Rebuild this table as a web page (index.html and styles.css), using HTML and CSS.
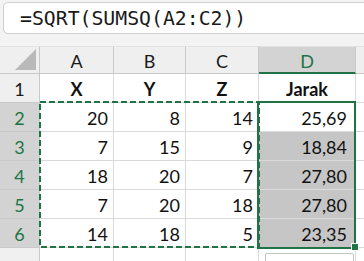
FILE: index.html
```html
<!DOCTYPE html>
<html>
<head>
<meta charset="utf-8">
<link rel="stylesheet" href="styles.css">
</head>
<body>
<div class="app">
  <div class="fbar-wrap">
    <div class="fbar">=SQRT(SUMSQ(A2:C2))</div>
  </div>
  <div class="sheet">
    <div class="h corner"><span class="tri"></span></div>
    <div class="h col">A</div>
    <div class="h col">B</div>
    <div class="h col">C</div>
    <div class="h col sel">D</div>
    <div class="h col rest"></div>

    <div class="h row">1</div>
    <div class="c b">X</div>
    <div class="c b">Y</div>
    <div class="c b">Z</div>
    <div class="c b">Jarak</div>
    <div class="c rest"></div>

    <div class="h row sel">2</div>
    <div class="c n">20</div>
    <div class="c n">8</div>
    <div class="c n">14</div>
    <div class="c n d">25,69</div>
    <div class="c rest"></div>

    <div class="h row sel">3</div>
    <div class="c n">7</div>
    <div class="c n">15</div>
    <div class="c n">9</div>
    <div class="c n d hl">18,84</div>
    <div class="c rest"></div>

    <div class="h row sel">4</div>
    <div class="c n">18</div>
    <div class="c n">20</div>
    <div class="c n">7</div>
    <div class="c n d hl">27,80</div>
    <div class="c rest"></div>

    <div class="h row sel">5</div>
    <div class="c n">7</div>
    <div class="c n">20</div>
    <div class="c n">18</div>
    <div class="c n d hl">27,80</div>
    <div class="c rest"></div>

    <div class="h row sel">6</div>
    <div class="c n">14</div>
    <div class="c n">18</div>
    <div class="c n">5</div>
    <div class="c n d hl">23,35</div>
    <div class="c rest"></div>

    <div class="h row empty"></div>
    <div class="c e"></div>
    <div class="c e"></div>
    <div class="c e"></div>
    <div class="c e"></div>
    <div class="c e rest"></div>

    <svg class="marquee" width="222" height="148" viewBox="0 0 222 148">
      <rect x="1" y="1" width="219" height="145" fill="none" stroke="#217346" stroke-width="2" stroke-dasharray="6 3"/>
    </svg>
    <div class="selbox"></div>
    <div class="handle"></div>
    <div class="qa"></div>
  </div>
</div>
</body>
</html>
```
FILE: styles.css
```css
* { box-sizing: border-box; }
html, body { margin: 0; padding: 0; }
body {
  width: 364px;
  height: 261px;
  overflow: hidden;
  background: #f3f3f3;
  font-family: Lato, "Open Sans", sans-serif;
  color: #111;
}
.app { display: flex; flex-direction: column; }
.fbar-wrap {
  padding: 2px 0 12px 3px;
}
.fbar {
  height: 32px;
  width: 370px;
  background: #fff;
  border: 1px solid #cfcfcf;
  border-radius: 5px;
  padding-left: 16px;
  font-family: "DejaVu Sans Mono", monospace;
  font-size: 19.8px;
  line-height: 32px;
  color: #1a1a1a;
}
.sheet {
  position: relative;
  display: grid;
  grid-template-columns: 40px 74px 72px 73px 97px 1fr;
  grid-template-rows: 28px 29px 29px 29px 29px 29px 29px 1fr;
  height: 215px;
  background: #fff;
}
.h {
  background: #efefef;
  border-right: 1px solid #c9c9c9;
  border-bottom: 1px solid #c9c9c9;
  font-size: 18px;
  display: flex;
  align-items: center;
  justify-content: center;
  color: #1a1a1a;
}
.col { border-top: 1px solid #e2e2e2; padding-top: 2px; }
.corner { position: relative; border-top: 1px solid #e2e2e2; }
.tri {
  position: absolute;
  right: 3px;
  bottom: 3px;
  width: 0;
  height: 0;
  border-left: 21px solid transparent;
  border-bottom: 21px solid #b9b9b9;
}
.col.sel {
  background: #d3d3d3;
  color: #217346;
  border-bottom: 2px solid #217346;
}
.col.rest { border-right: none; }
.row { padding-top: 1px; }
.row.sel {
  background: #d3d3d3;
  color: #217346;
}
.row.empty { background: #f0f0f0; border-bottom: none; }
.c {
  border-right: 1px solid #dadada;
  border-bottom: 1px solid #dadada;
  font-size: 18px;
  display: flex;
  align-items: center;
  padding-top: 2px;
  color: #111;
}
.c.rest { border-right: none; }
.b { font-weight: 700; justify-content: center; }
.n { justify-content: flex-end; padding-right: 5px; }
.n.d { padding-right: 8px; }
.hl { background: #c6c6c6; }
.e { border-bottom: none; background: #fff; }
.marquee {
  position: absolute;
  left: 39px;
  top: 55px;
}
.selbox {
  position: absolute;
  left: 257px;
  top: 55px;
  width: 99px;
  height: 148px;
  border: 2px solid #217346;
}
.handle {
  position: absolute;
  left: 351px;
  top: 197px;
  width: 8px;
  height: 8px;
  background: #217346;
  border: 1px solid #fff;
}
.qa {
  position: absolute;
  left: 265px;
  top: 207px;
  width: 89px;
  height: 16px;
  background: #fff;
  border: 1px solid #c4c4c4;
  border-radius: 2px;
}
```
